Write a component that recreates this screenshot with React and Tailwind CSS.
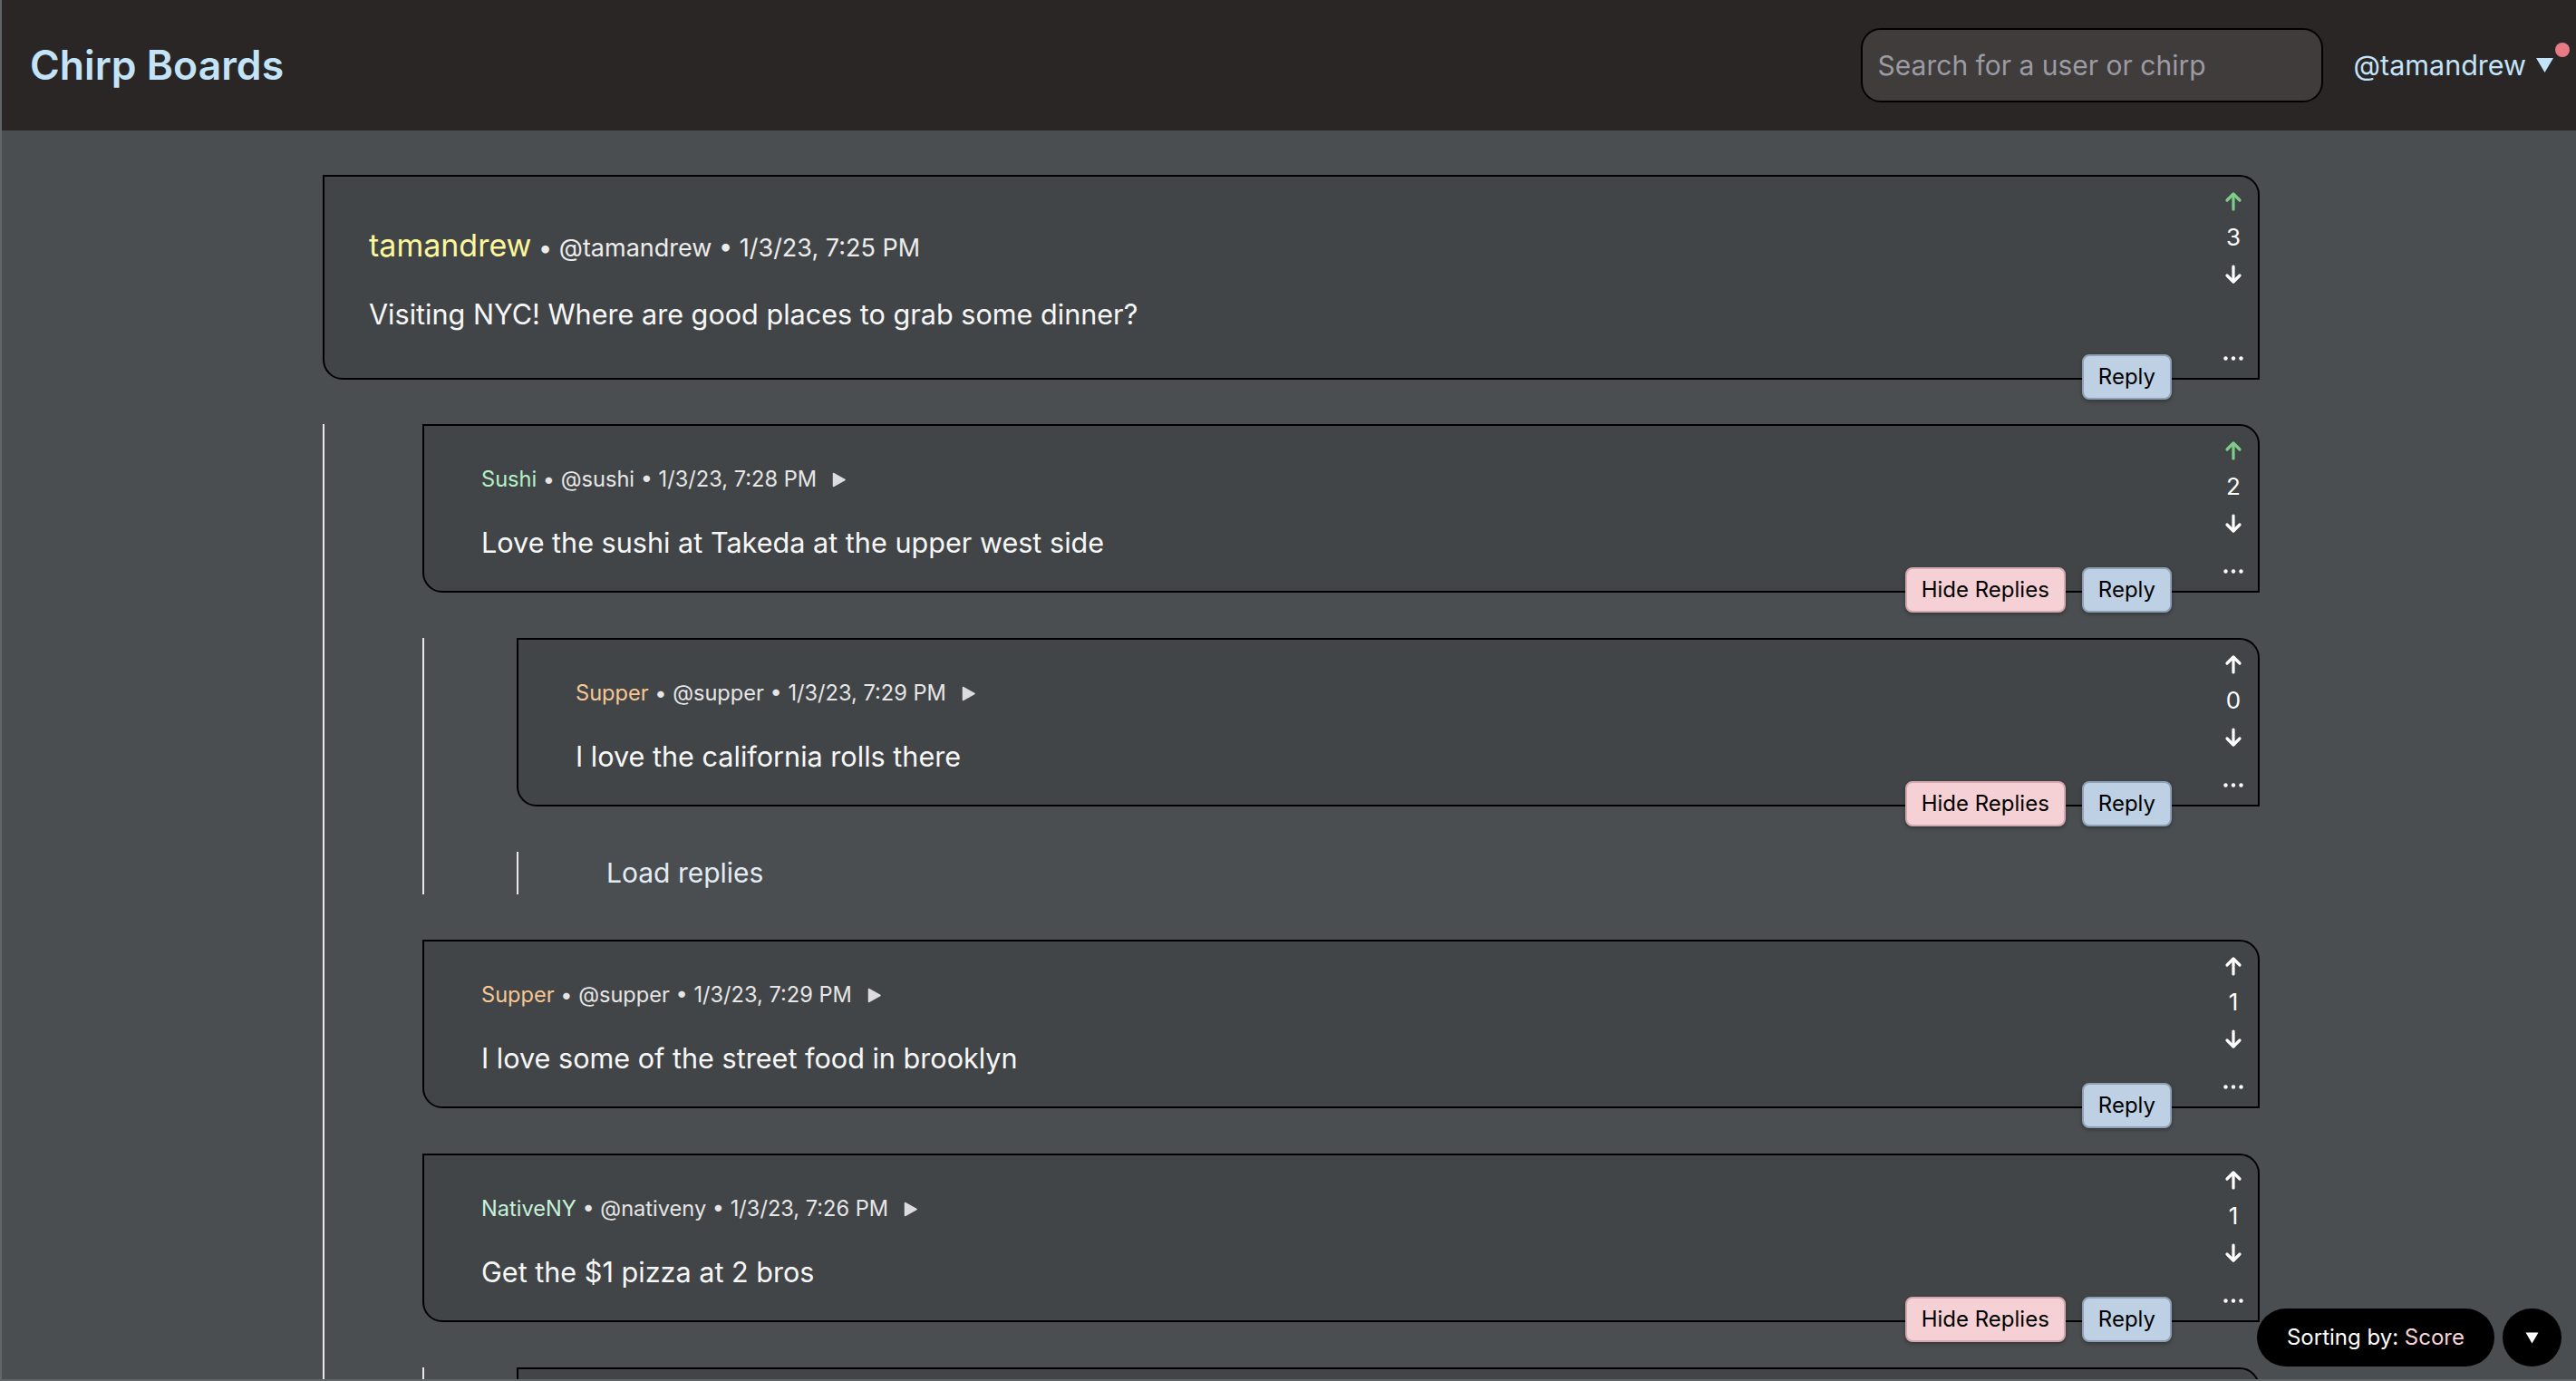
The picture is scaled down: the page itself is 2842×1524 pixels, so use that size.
import React from "react";

function UpArrow({ active }) {
  return (
    <svg
      width="20"
      height="22"
      viewBox="0 0 20 22"
      fill="none"
      stroke="currentColor"
      strokeWidth="3.2"
      strokeLinecap="round"
      strokeLinejoin="round"
      className={active ? "text-[#7fcb8a]" : "text-white"}
    >
      <path d="M10 20V3.5" />
      <path d="M3 10L10 3L17 10" />
    </svg>
  );
}

function DownArrow() {
  return (
    <svg
      width="20"
      height="22"
      viewBox="0 0 20 22"
      fill="none"
      stroke="currentColor"
      strokeWidth="3.2"
      strokeLinecap="round"
      strokeLinejoin="round"
      className="text-white"
    >
      <path d="M10 2V18.5" />
      <path d="M3 12L10 19L17 12" />
    </svg>
  );
}

function Dots() {
  return (
    <svg width="22" height="5" viewBox="0 0 22 5" className="mt-auto">
      <circle cx="2.5" cy="2.5" r="2.2" fill="white" />
      <circle cx="11" cy="2.5" r="2.2" fill="white" />
      <circle cx="19.5" cy="2.5" r="2.2" fill="white" />
    </svg>
  );
}

function RightTri() {
  return (
    <svg width="15" height="17" viewBox="0 0 15 17" className="ml-[17px]">
      <path d="M1.5 1.5L14 8.5L1.5 15.5Z" fill="#dcdce0" stroke="#dcdce0" strokeWidth="1.5" strokeLinejoin="round" />
    </svg>
  );
}

function Frame({ root, children }) {
  return (
    <div
      className={
        "relative flex shrink-0 border-2 border-black bg-[#424547] rounded-tr-[22px] rounded-bl-[22px] " +
        (root ? "h-[226px]" : "h-[186px]")
      }
    >
      {children}
    </div>
  );
}

function Card({ root, name, nameClass, handle, time, body, score, upvoted, hideReplies }) {
  return (
    <Frame root={root}>
      <div className={"flex flex-1 flex-col " + (root ? "pl-[49px] pt-[56px]" : "pl-[63px] pt-[43px]")}>
        {root ? (
          <div className="flex items-baseline whitespace-pre leading-[40px]">
            <span className={"text-[34px] " + nameClass}>{name}</span>
            <span className="text-[27px] text-[#ececec]">{` • ${handle} • ${time}`}</span>
          </div>
        ) : (
          <div className="flex items-center text-[23.6px] leading-[32px]">
            <span className="whitespace-pre">
              <span className={nameClass}>{name}</span>
              <span className="text-[#e6e6e6]">{` • ${handle} • ${time}`}</span>
            </span>
            <RightTri />
          </div>
        )}
        <p className={"text-[30.6px] leading-[38px] text-[#f7f7f7] " + (root ? "mt-[34px]" : "mt-[35px]")}>{body}</p>
      </div>
      <div className="mr-[7px] flex w-[40px] flex-col items-center pt-[16px] pb-[19px]">
        <UpArrow active={upvoted} />
        <span className="mt-[13px] text-[26px] leading-[32px] text-white">{score}</span>
        <div className="mt-[14px]">
          <DownArrow />
        </div>
        <Dots />
      </div>
      <div className="absolute right-[95px] bottom-[-24px] flex gap-[18px]">
        {hideReplies && (
          <button className="flex h-[50px] items-center rounded-[8px] border-2 border-[#d2a9ae] bg-[#f5d0d4] px-[16px] text-[24px] leading-none text-black shadow-[0_2px_4px_rgba(0,0,0,0.3)]">
            Hide Replies
          </button>
        )}
        <button className="flex h-[50px] items-center rounded-[8px] border-2 border-[#8fa0b4] bg-[#bed0e4] px-[16px] text-[24px] leading-none text-black shadow-[0_2px_4px_rgba(0,0,0,0.3)]">
          Reply
        </button>
      </div>
    </Frame>
  );
}

export default function App() {
  return (
    <div className="h-screen overflow-hidden border-l-2 border-b-2 border-[#626567] bg-[#4a4e50] font-['Inter','Noto_Sans',sans-serif]">
      <header className="flex h-[144px] items-center justify-between bg-[#2a2626] pl-[31px] pr-[7px]">
        <h1 className="text-[44.5px] font-semibold text-[#c3e3f8]">Chirp Boards</h1>
        <div className="flex items-center">
          <input
            className="h-[82px] w-[510px] rounded-[22px] border-2 border-black bg-[#403c3c] px-[17px] text-[30px] text-white outline-none placeholder:text-[#9b9ba3]"
            placeholder="Search for a user or chirp"
          />
          <span className="ml-[34px] text-[30.5px] text-[#c3e3f8]">@tamandrew</span>
          <svg width="21" height="18" viewBox="0 0 21 18" className="ml-[10px]">
            <path d="M1 1H20L10.5 17Z" fill="#c3e3f8" />
          </svg>
          <span className="mb-[34px] ml-[1px] h-[16px] w-[16px] rounded-full bg-[#e87a85]" />
        </div>
      </header>

      <main className="pt-[49px] pl-[354px] pr-[349px]">
        <div className="flex flex-col">
          <Card
            root
            name="tamandrew"
            nameClass="text-[#fdf79c]"
            handle="@tamandrew"
            time="1/3/23, 7:25 PM"
            body="Visiting NYC! Where are good places to grab some dinner?"
            score={3}
            upvoted
          />
          <div className="mt-[49px] flex flex-col gap-[50px] border-l-2 border-[#e8e8e8] pl-[108px]">
            <div className="flex flex-col">
              <Card
                name="Sushi"
                nameClass="text-[#b4f1c8]"
                handle="@sushi"
                time="1/3/23, 7:28 PM"
                body="Love the sushi at Takeda at the upper west side"
                score={2}
                upvoted
                hideReplies
              />
              <div className="mt-[50px] flex flex-col border-l-2 border-[#e8e8e8] pl-[102px]">
                <Card
                  name="Supper"
                  nameClass="text-[#f7c796]"
                  handle="@supper"
                  time="1/3/23, 7:29 PM"
                  body="I love the california rolls there"
                  score={0}
                  hideReplies
                />
                <div className="mt-[50px] flex h-[47px] items-center border-l-2 border-[#e8e8e8] pl-[97px] text-[30px] text-[#e3ebf5]">
                  Load replies
                </div>
              </div>
            </div>
            <Card
              name="Supper"
              nameClass="text-[#f7c796]"
              handle="@supper"
              time="1/3/23, 7:29 PM"
              body="I love some of the street food in brooklyn"
              score={1}
            />
            <div className="flex flex-col">
              <Card
                name="NativeNY"
                nameClass="text-[#c6f2da]"
                handle="@nativeny"
                time="1/3/23, 7:26 PM"
                body="Get the $1 pizza at 2 bros"
                score={1}
                hideReplies
              />
              <div className="mt-[50px] flex flex-col border-l-2 border-[#e8e8e8] pl-[102px]">
                <Frame />
              </div>
            </div>
          </div>
        </div>
      </main>

      <div className="fixed right-[16px] bottom-[16px] flex items-center gap-[9px]">
        <div className="flex h-[64px] items-center rounded-full bg-black px-[33px] text-[24px] text-white">
          Sorting by:&nbsp;<span className="text-[#f9d3d7]">Score</span>
        </div>
        <div className="flex h-[64px] w-[65px] items-center justify-center rounded-full bg-black">
          <svg width="15" height="13" viewBox="0 0 15 13">
            <path d="M0.5 0.5H14.5L7.5 12.5Z" fill="white" />
          </svg>
        </div>
      </div>
    </div>
  );
}
